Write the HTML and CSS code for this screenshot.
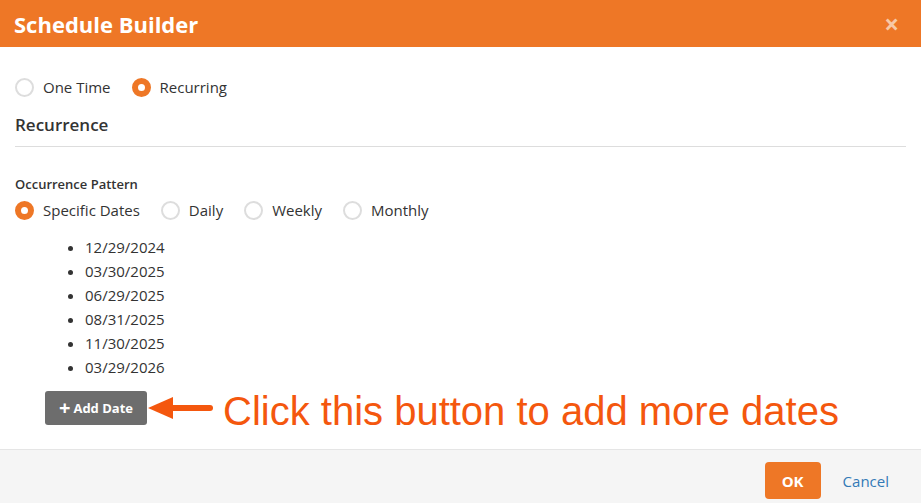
FILE: index.html
```html
<!DOCTYPE html>
<html lang="en">
<head>
    <meta charset="UTF-8">
    <title>Schedule Builder</title>
    <link rel="stylesheet" href="styles.css">
</head>
<body>
    <div class="modal">
        <header class="modal-header">
            <h1>Schedule Builder</h1>
            <span class="close">&times;</span>
        </header>
        <div class="modal-body">
            <div class="radio-row top">
                <label class="radio"><span class="dot"></span>One Time</label>
                <label class="radio"><span class="dot on"></span>Recurring</label>
            </div>
            <h2 class="section">Recurrence</h2>
            <div class="field-label">Occurrence Pattern</div>
            <div class="radio-row">
                <label class="radio"><span class="dot on"></span>Specific Dates</label>
                <label class="radio"><span class="dot"></span>Daily</label>
                <label class="radio"><span class="dot"></span>Weekly</label>
                <label class="radio"><span class="dot"></span>Monthly</label>
            </div>
            <ul class="dates">
                <li>12/29/2024</li>
                <li>03/30/2025</li>
                <li>06/29/2025</li>
                <li>08/31/2025</li>
                <li>11/30/2025</li>
                <li>03/29/2026</li>
            </ul>
            <div class="add-row">
                <button class="add-btn"><span class="plus">+</span>Add Date</button>
                <svg class="arrow" width="66" height="24" viewBox="0 0 66 24">
                    <line x1="20" y1="12" x2="62" y2="12" stroke="#f4570e" stroke-width="6" stroke-linecap="round"/>
                    <polygon points="0,12 25,1 25,23" fill="#f4570e"/>
                </svg>
                <span class="note">Click this button to add more dates</span>
            </div>
        </div>
        <footer class="modal-footer">
            <button class="ok">OK</button>
            <a class="cancel" href="#">Cancel</a>
        </footer>
    </div>
</body>
</html>
```

FILE: styles.css
```css
* {
    box-sizing: border-box;
    margin: 0;
    padding: 0;
}
body {
    font-family: 'Open Sans', 'Noto Sans', sans-serif;
    color: #333;
    background: #fff;
}
.modal {
    width: 921px;
    height: 503px;
    display: flex;
    flex-direction: column;
}
.modal-header {
    background: #ee7726;
    height: 47px;
    display: flex;
    align-items: center;
    justify-content: space-between;
    padding: 0 22px 0 14px;
}
.modal-header h1 {
    color: #fff;
    font-size: 22px;
    font-weight: 700;
}
.close {
    color: #f7c9a6;
    font-size: 26px;
    font-weight: 700;
    line-height: 1;
}
.modal-body {
    flex: 1;
    padding: 0 15px;
}
.radio-row {
    display: flex;
    align-items: center;
    height: 24px;
}
.radio-row.top {
    margin-top: 28px;
}
.radio {
    display: flex;
    align-items: center;
    font-size: 15px;
    margin-right: 21px;
}
.dot {
    width: 19px;
    height: 19px;
    border: 2px solid #ddd;
    border-radius: 50%;
    margin-right: 9px;
    background: #fff;
}
.dot.on {
    border: 6px solid #ee7726;
}
.section {
    font-size: 17px;
    font-weight: 600;
    margin-top: 14px;
    padding-bottom: 10px;
    border-bottom: 1px solid #ddd;
}
.field-label {
    font-size: 13px;
    font-weight: 600;
    margin-top: 28px;
    margin-bottom: 5px;
}
.dates {
    margin: 13px 0 0 70px;
    font-size: 15px;
    line-height: 24px;
}
.add-row {
    display: flex;
    align-items: flex-start;
    margin-top: 12px;
    margin-left: 30px;
}
.add-btn {
    background: #6d6d6d;
    color: #fff;
    border: none;
    border-radius: 3px;
    font-family: 'Open Sans', sans-serif;
    font-weight: 700;
    font-size: 13px;
    height: 34px;
    width: 102px;
    display: flex;
    align-items: center;
    justify-content: center;
}
.plus {
    font-size: 20px;
    font-weight: 700;
    margin-right: 3px;
    line-height: 1;
}
.arrow {
    margin-left: 1px;
    margin-top: 5px;
}
.note {
    font-family: 'Liberation Sans', Arial, sans-serif;
    color: #f4570e;
    font-size: 40px;
    line-height: 34px;
    padding-top: 3px;
    margin-left: 9px;
}
.modal-footer {
    height: 54px;
    background: #f5f5f5;
    border-top: 1px solid #e5e5e5;
    display: flex;
    align-items: center;
    justify-content: flex-end;
    padding: 0 32px 0 0;
}
.ok {
    background: #ee7726;
    color: #fff;
    border: none;
    border-radius: 4px;
    font-family: 'Open Sans', sans-serif;
    font-weight: 700;
    font-size: 15px;
    width: 56px;
    height: 37px;
    margin-top: 8px;
    margin-right: 22px;
}
.cancel {
    color: #337ab7;
    text-decoration: none;
    font-size: 15px;
    margin-top: 8px;
}
```
